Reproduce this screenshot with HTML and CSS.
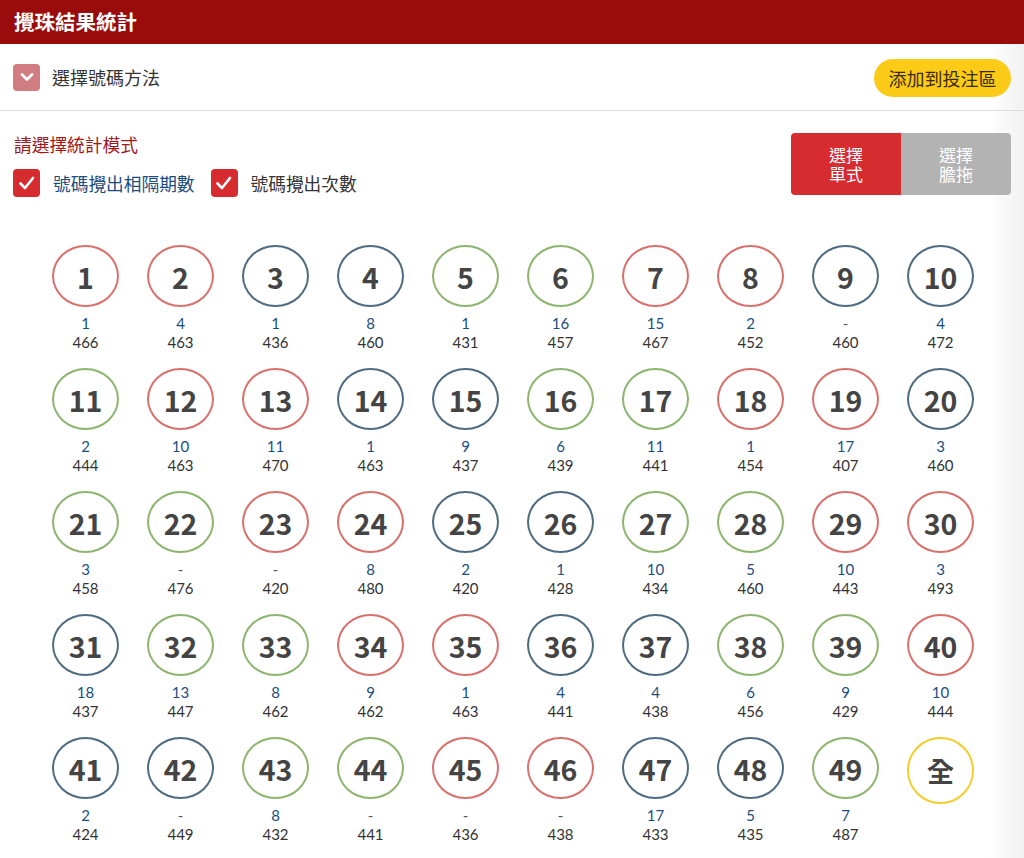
FILE: index.html
```html
<!DOCTYPE html>
<html lang="zh-Hant">
<head>
<meta charset="utf-8">
<title>攪珠結果統計</title>
<link rel="stylesheet" href="styles.css">
</head>
<body>
<header class="topbar">攪珠結果統計</header>
<main class="page">
  <div class="method-row">
    <div class="method-left">
      <span class="collapse-icon"><svg width="16" height="16" viewBox="0 0 16 16"><polyline points="3,5.5 8,10.5 13,5.5" fill="none" stroke="#fff" stroke-width="2.8" stroke-linecap="round" stroke-linejoin="round"/></svg></span>
      <span class="method-label">選擇號碼方法</span>
    </div>
    <button class="add-btn">添加到投注區</button>
  </div>
  <section class="options">
    <div class="mode">
      <div class="mode-title">請選擇統計模式</div>
      <div class="checks">
        <label class="check blue"><span class="box"><svg width="20" height="20" viewBox="0 0 20 20"><polyline points="3.5,10.5 8,15 16,5" fill="none" stroke="#fff" stroke-width="2.6" stroke-linecap="round" stroke-linejoin="round"/></svg></span>號碼攪出相隔期數</label>
        <label class="check"><span class="box"><svg width="20" height="20" viewBox="0 0 20 20"><polyline points="3.5,10.5 8,15 16,5" fill="none" stroke="#fff" stroke-width="2.6" stroke-linecap="round" stroke-linejoin="round"/></svg></span>號碼攪出次數</label>
      </div>
    </div>
    <div class="seg">
      <div class="seg-item active"><span>選擇</span><span>單式</span></div>
      <div class="seg-item"><span>選擇</span><span>膽拖</span></div>
    </div>
  </section>
  <section class="balls" id="balls"></section>
</main>
<script src="app.js"></script>
</body>
</html>
```
FILE: app.js
```js
var data = [
  [1,'1',466],[2,'4',463],[3,'1',436],[4,'8',460],[5,'1',431],[6,'16',457],[7,'15',467],[8,'2',452],[9,'-',460],[10,'4',472],
  [11,'2',444],[12,'10',463],[13,'11',470],[14,'1',463],[15,'9',437],[16,'6',439],[17,'11',441],[18,'1',454],[19,'17',407],[20,'3',460],
  [21,'3',458],[22,'-',476],[23,'-',420],[24,'8',480],[25,'2',420],[26,'1',428],[27,'10',434],[28,'5',460],[29,'10',443],[30,'3',493],
  [31,'18',437],[32,'13',447],[33,'8',462],[34,'9',462],[35,'1',463],[36,'4',441],[37,'4',438],[38,'6',456],[39,'9',429],[40,'10',444],
  [41,'2',424],[42,'-',449],[43,'8',432],[44,'-',441],[45,'-',436],[46,'-',438],[47,'17',433],[48,'5',435],[49,'7',487]
];
var red = [1,2,7,8,12,13,18,19,23,24,29,30,34,35,40,45,46];
var blue = [3,4,9,10,14,15,20,25,26,31,36,37,41,42,47,48];
var html = '';
data.forEach(function (d) {
  var c = red.indexOf(d[0]) >= 0 ? 'red' : (blue.indexOf(d[0]) >= 0 ? 'blue' : 'green');
  html += '<div class="cell"><div class="ball ' + c + '">' + d[0] + '</div>' +
    '<div class="gap' + (d[1] === '-' ? ' none' : '') + '">' + d[1] + '</div><div class="count">' + d[2] + '</div></div>';
});
html += '<div class="cell"><div class="ball all">全</div></div>';
document.getElementById('balls').innerHTML = html;
```
FILE: styles.css
```css
* { box-sizing: border-box; }
html, body {
  margin: 0;
  padding: 0;
  background: #fff;
}
body {
  font-family: "Noto Sans CJK TC", "Noto Sans", sans-serif;
  color: #333;
  width: 1024px;
}
.topbar {
  height: 44px;
  background: #9a0b0b;
  color: #fff;
  font-size: 20.5px;
  font-weight: 700;
  line-height: 42px;
  padding-left: 14px;
}
.page {
  background: linear-gradient(to right, #fff 0, #fff 988px, #f1f1f1 1024px);
  min-height: 814px;
}
.method-row {
  height: 67px;
  border-bottom: 1px solid #dedede;
  display: flex;
  align-items: center;
  justify-content: space-between;
  padding: 0 13px 0 13px;
}
.method-left {
  display: flex;
  align-items: center;
  gap: 12px;
}
.collapse-icon {
  width: 27px;
  height: 27px;
  border-radius: 4px;
  background: #d17c80;
  display: flex;
  align-items: center;
  justify-content: center;
}
.method-label {
  font-size: 18px;
  color: #333;
}
.add-btn {
  font-family: inherit;
  border: none;
  background: #fbcb18;
  color: #3a2a00;
  font-size: 18px;
  height: 38px;
  width: 137px;
  padding: 0;
  border-radius: 19px;
  line-height: 38px;
  margin-top: 2px;
}
.options {
  display: flex;
  justify-content: space-between;
  padding: 21px 13px 0 13px;
}
.mode-title {
  color: #a3161a;
  font-size: 17.7px;
  line-height: 24px;
  padding-left: 1px;
}
.checks {
  display: flex;
  gap: 16px;
  margin-top: 13px;
}
.check {
  display: flex;
  align-items: center;
  gap: 13px;
  font-size: 17.7px;
  color: #333;
  line-height: 28px;
}
.check.blue { color: #1b4d80; }
.box {
  width: 27px;
  height: 28px;
  border-radius: 4px;
  background: #d62b2f;
  display: flex;
  align-items: center;
  justify-content: center;
}
.seg {
  display: flex;
  width: 220px;
  height: 62px;
  border-radius: 4px;
  overflow: hidden;
  margin-top: 1px;
}
.seg-item {
  flex: 1;
  background: #b3b3b3;
  color: #fff;
  font-size: 17px;
  display: flex;
  flex-direction: column;
  align-items: center;
  justify-content: center;
  text-align: center;
}
.seg-item span {
  display: block;
  height: 19.5px;
  line-height: 19.5px;
}
.seg-item.active { background: #d62b2f; }
.balls {
  display: grid;
  grid-template-columns: repeat(10, 95px);
  row-gap: 16px;
  padding: 48px 0 0 38px;
}
.cell {
  display: flex;
  flex-direction: column;
  align-items: center;
  height: 107px;
}
.ball {
  width: 67px;
  height: 67px;
  border-radius: 50%;
  border: 2px solid #999;
  display: flex;
  align-items: center;
  justify-content: center;
  font-size: 28.5px;
  font-weight: 700;
  color: #444;
  background: #fff;
}
.ball.red { border-color: #d8716c; }
.ball.blue { border-color: #4f6b80; }
.ball.green { border-color: #8db56f; }
.ball.all { border-color: #f5cd2b; font-size: 27px; }
.gap {
  font-family: Lato, "Noto Sans", sans-serif;
  font-size: 15px;
  line-height: 19px;
  color: #1b4d80;
  margin-top: 7px;
}
.gap.none { color: #555; }
.count {
  font-family: Lato, "Noto Sans", sans-serif;
  font-size: 15px;
  line-height: 19px;
  color: #333;
}
```
